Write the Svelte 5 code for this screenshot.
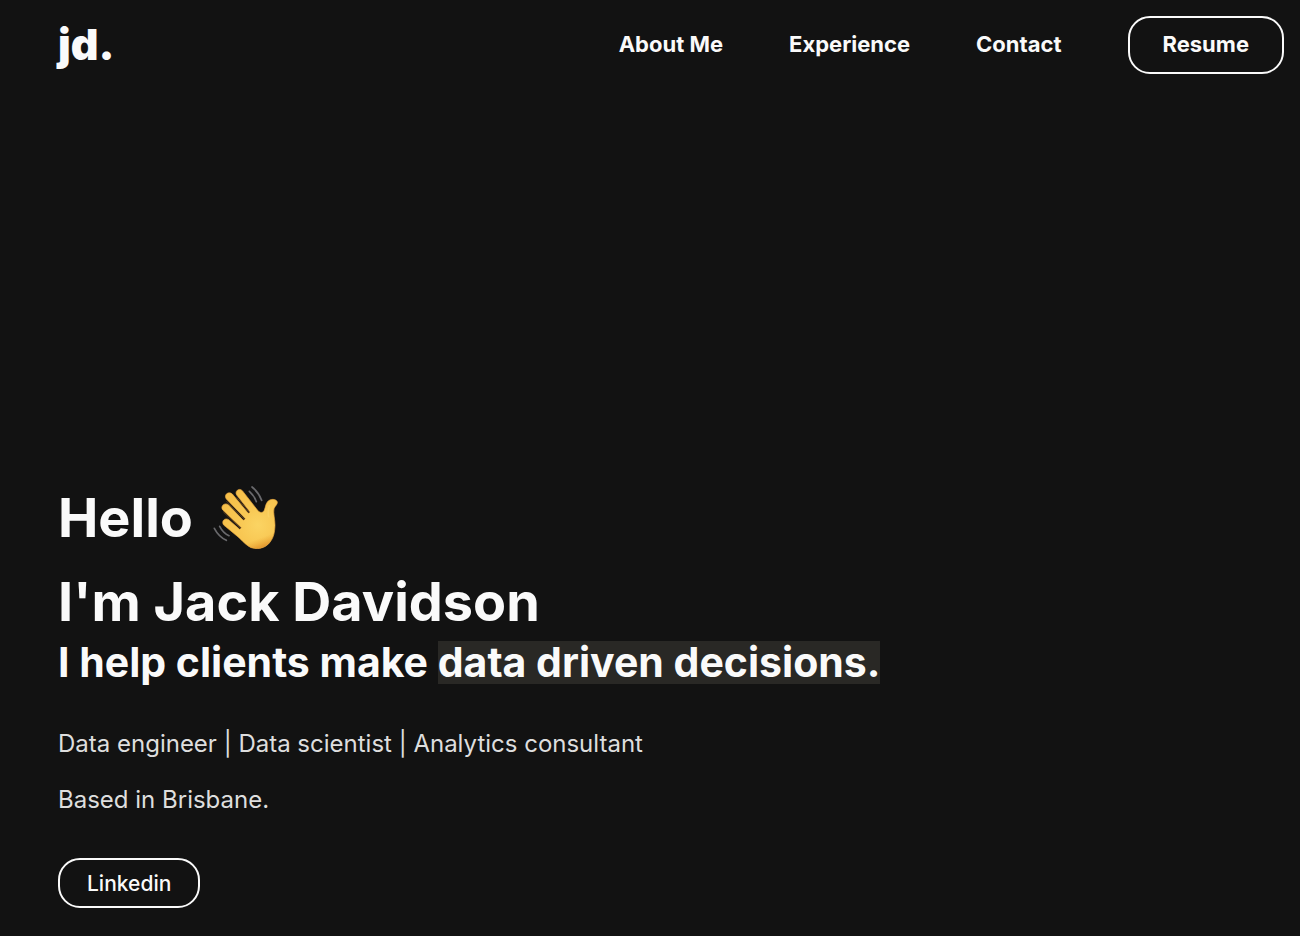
<script>
  const links = [
    { label: 'About Me', href: '#about' },
    { label: 'Experience', href: '#experience' },
    { label: 'Contact', href: '#contact' }
  ];
</script>

<div class="page">
  <header>
    <a class="logo" href="#home">jd.</a>
    <nav aria-label="Main">
      {#each links as link}
        <a href={link.href}>{link.label}</a>
      {/each}
      <a class="pill resume" href="#resume">Resume</a>
    </nav>
  </header>

  <main id="home">
    <h1>
      <span class="hello">
        Hello
        <svg viewBox="40 30 198 198" aria-hidden="true">
          <defs>
            <radialGradient id="skin" gradientUnits="userSpaceOnUse" cx="175" cy="150" r="120">
              <stop offset="0" stop-color="#fbd463" />
              <stop offset="0.45" stop-color="#f8c854" />
              <stop offset="1" stop-color="#f6bf49" />
            </radialGradient>
            <linearGradient id="shade" gradientUnits="userSpaceOnUse" x1="150" y1="150" x2="178" y2="224">
              <stop offset="0.6" stop-color="#e79a28" stop-opacity="0" />
              <stop offset="1" stop-color="#d98420" stop-opacity="0.8" />
            </linearGradient>
            <path id="hand" d="M111 60C104 49 118 37 128 47L174 106C181 115 191 114 194 105C198 96 197 89 203 81C211 70 230 71 233 81C234 89 226 92 223 101C220 114 226 132 226 151C225 174 222 188 209 204C198 217 179 224 158 219C144 215 131 201 118 188L72 150C64 139 75 127 87 134L120 163L125 158L70 106C60 95 74 81 86 89L131 136L137 131L80 72C71 60 86 47 98 57L146 115L151 111Z" />
          </defs>
          <use href="#hand" fill="url(#skin)" />
          <use href="#hand" fill="url(#shade)" stroke="#e8a83f" stroke-width="2" />
          <g fill="none" stroke-linecap="round">
            <path d="M112 68L149 113M81 79L134 133M72 112L123 160" stroke="#7a5120" stroke-width="2" />
            <path d="M209 92Q204 108 207 125" stroke="#fbd56b" stroke-width="5" opacity="0.6" />
            <path d="M157 36Q177 52 186 76M149 49Q164 62 170 80M44 160Q57 185 80 196M60 154Q70 174 88 182" stroke="#69696c" stroke-width="5" />
          </g>
        </svg>
      </span>
      <span class="name">I'm Jack Davidson</span>
    </h1>
    <h2>I help clients make <mark>data driven decisions.</mark></h2>
    <p>Data engineer | Data scientist | Analytics consultant</p>
    <p>Based in Brisbane.</p>
    <a class="pill linkedin" href="#linkedin">Linkedin</a>
  </main>
</div>

<style>
  :global(body) {
    margin: 0;
    background: #121212;
  }

  .page {
    display: flex;
    flex-direction: column;
    box-sizing: border-box;
    min-height: 100vh;
    background: #121212;
    color: #fafafa;
    font-family: Inter, "Liberation Sans", sans-serif;
  }

  a {
    color: inherit;
    text-decoration: none;
  }

  header {
    display: flex;
    align-items: center;
    justify-content: space-between;
    padding: 16px 16px 16px 58px;
  }

  .logo {
    padding-bottom: 2px;
    font-size: 43px;
    line-height: 56px;
    font-weight: 900;
  }

  nav {
    display: flex;
    align-items: baseline;
    gap: 66px;
    font-size: 22px;
    line-height: 28px;
    font-weight: 700;
  }

  .pill {
    border: 2px solid #fafafa;
    border-radius: 22px;
  }

  .resume {
    padding: 12px 33px 14px;
  }

  main {
    display: flex;
    flex: 1;
    flex-direction: column;
    align-items: flex-start;
    justify-content: flex-end;
    padding: 0 56px 28px 58px;
  }

  h1,
  h2,
  p {
    margin: 0;
  }

  h1 {
    font-size: 54px;
    line-height: 78px;
    font-weight: 700;
  }

  .hello {
    display: flex;
    align-items: center;
    gap: 20px;
    margin-bottom: 6px;
  }

  .hello svg {
    width: 66px;
    height: 66px;
  }

  .name {
    display: block;
  }

  h2 {
    margin-bottom: 44px;
    font-size: 41px;
    line-height: 43px;
    font-weight: 700;
  }

  mark {
    display: inline-block;
    background: #292825;
    color: inherit;
  }

  p {
    margin-bottom: 24px;
    color: #dedede;
    font-size: 24px;
    line-height: 32px;
  }

  .linkedin {
    margin-top: 18px;
    padding: 12px 27px 10px;
    font-size: 21px;
    line-height: 24px;
    font-weight: 500;
  }
</style>
